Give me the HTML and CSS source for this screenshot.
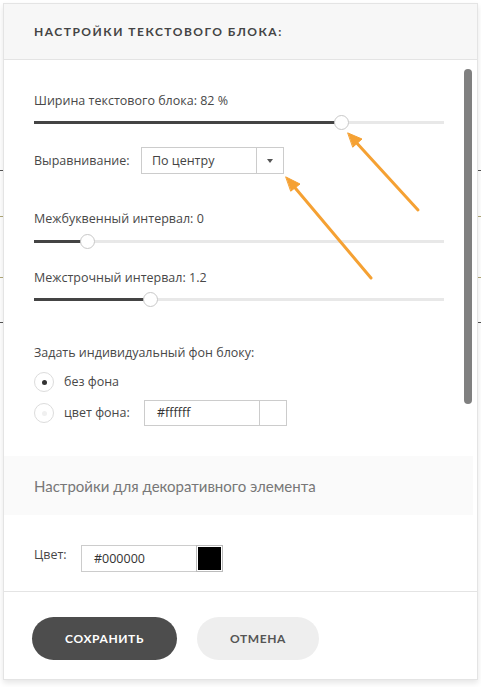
FILE: index.html
```html
<!DOCTYPE html>
<html lang="ru">
<head>
<meta charset="utf-8">
<title>Настройки текстового блока</title>
<link rel="stylesheet" href="styles.css">
</head>
<body>
<div class="backdrop">
  <span class="mark mark-l dark" style="top:170px"></span>
  <span class="mark mark-l olive" style="top:216px"></span>
  <span class="mark mark-l olive" style="top:277px"></span>
  <span class="mark mark-l dark" style="top:322px"></span>
  <span class="mark mark-r dark" style="top:170px"></span>
  <span class="mark mark-r olive" style="top:216px"></span>
  <span class="mark mark-r olive" style="top:277px"></span>
  <span class="mark mark-r dark" style="top:322px"></span>
</div>
<div class="page">
  <div class="modal">
    <div class="header">НАСТРОЙКИ ТЕКСТОВОГО БЛОКА:</div>
    <div class="body">
      <div class="content">
        <div class="label l1">Ширина текстового блока: 82 %</div>
        <div class="slider"><div class="fill" style="width:75%"></div><span class="thumb" style="left:75%"></span></div>

        <div class="align-row">
          <span class="label al">Выравнивание:</span>
          <div class="select"><span class="sel-text">По центру</span><span class="sel-btn"><span class="caret"></span></span></div>
        </div>

        <div class="label l3">Межбуквенный интервал: 0</div>
        <div class="slider"><div class="fill" style="width:13%"></div><span class="thumb" style="left:13%"></span></div>

        <div class="label l4">Межстрочный интервал: 1.2</div>
        <div class="slider"><div class="fill" style="width:28.5%"></div><span class="thumb" style="left:28.5%"></span></div>

        <div class="label l5">Задать индивидуальный фон блоку:</div>
        <div class="radio-row r1"><span class="radio on"></span><span class="label">без фона</span></div>
        <div class="radio-row r2"><span class="radio"></span><span class="label rl">цвет фона:</span>
          <div class="color-input"><span class="hex">#ffffff</span><span class="swatch white"></span></div>
        </div>
      </div>
      <div class="section">Настройки для декоративного элемента</div>
      <div class="content">
        <div class="color-row">
          <span class="label cl">Цвет:</span>
          <div class="color-input small"><span class="hex">#000000</span><span class="swatch black"></span></div>
        </div>
      </div>
      <div class="scrollbar"></div>
    </div>
    <div class="footer">
      <button class="btn save">СОХРАНИТЬ</button>
      <button class="btn cancel">ОТМЕНА</button>
    </div>
  </div>
</div>
<svg class="arrows" width="481" height="687" viewBox="0 0 481 687">
  <g stroke="#f5a133" stroke-width="3" stroke-linecap="round" fill="#f5a133">
    <line x1="418" y1="210" x2="354" y2="140"/>
    <polygon points="348,133 362,139 353,147" stroke-width="1" stroke-linejoin="round"/>
    <line x1="371" y1="278" x2="291" y2="183"/>
    <polygon points="286,177 300,184 291,191" stroke-width="1" stroke-linejoin="round"/>
  </g>
</svg>
</body>
</html>
```
FILE: styles.css
```css
* { box-sizing: border-box; }
html, body { margin: 0; padding: 0; }
body {
  width: 481px;
  height: 687px;
  background: #ffffff;
  font-family: "Open Sans", "Noto Sans", sans-serif;
  color: #444;
  position: relative;
  overflow: hidden;
}
.backdrop { position: absolute; inset: 0; }
.mark { position: absolute; height: 1px; width: 4px; }
.mark-l { left: 0; }
.mark-r { right: 0; }
.dark { background: #555; }
.olive { background: #b0a878; }

.page { padding: 3px 3px 0 3px; position: relative; }
.modal {
  width: 475px;
  height: 677px;
  border: 1px solid #e4e4e4;
  background: #fff;
  display: flex;
  flex-direction: column;
  box-shadow: 0 3px 6px rgba(0,0,0,0.10);
}
.header {
  height: 56px;
  flex: none;
  background: #f7f7f7;
  border-bottom: 1px solid #e4e4e4;
  padding-left: 30px;
  display: flex;
  align-items: center;
  font-family: Lato, "Open Sans", sans-serif;
  font-weight: 700;
  font-size: 12px;
  letter-spacing: 1.5px;
  color: #444;
}
.body {
  flex: 1;
  position: relative;
  overflow: hidden;
}
.content { padding-left: 30px; width: 440px; }
.label { font-size: 12.5px; line-height: 18px; color: #484848; }
.l1 { margin-top: 32px; margin-bottom: 5px; }
.slider {
  position: relative;
  width: 410px;
  height: 14px;
  display: flex;
  align-items: center;
  background: linear-gradient(#e8e8e8, #e8e8e8) left center / 100% 3px no-repeat;
}
.fill { height: 3px; background: #444; }
.thumb {
  position: absolute;
  top: -0.5px;
  width: 15px;
  height: 15px;
  margin-left: -7.5px;
  border-radius: 50%;
  background: #fff;
  border: 1px solid #c8c8c8;
}
.align-row {
  margin-top: 18px;
  display: flex;
  align-items: center;
  height: 27px;
}
.al { width: 107px; flex: none; }
.select {
  width: 143px;
  height: 27px;
  border: 1px solid #cccccc;
  display: flex;
}
.sel-text { flex: 1; padding-left: 10px; font-size: 12.5px; line-height: 25px; color: #444; }
.sel-btn { width: 27px; border-left: 1px solid #cccccc; display: flex; align-items: center; justify-content: center; }
.caret { width: 0; height: 0; border-left: 3.5px solid transparent; border-right: 3.5px solid transparent; border-top: 4px solid #555; margin-top: 1px; }
.l3 { margin-top: 36px; margin-bottom: 6px; }
.l4 { margin-top: 21px; margin-bottom: 5px; }
.l5 { margin-top: 38px; }
.radio-row { display: flex; align-items: center; }
.r1 { margin-top: 10px; height: 20px; }
.r2 { margin-top: 8px; height: 26px; }
.radio {
  flex: none;
  width: 20px; height: 20px; border-radius: 50%;
  border: 1px solid #dcdcdc; background: #fff;
  display: flex; align-items: center; justify-content: center;
  margin-right: 10px;
}
.radio::after { content: ""; width: 5px; height: 5px; border-radius: 50%; background: #f0f0f0; }
.radio.on::after { background: #333; }
.rl { width: 80px; flex: none; }
.color-input { display: flex; height: 26px; }
.hex {
  width: 115px; height: 26px; border: 1px solid #cccccc; border-right: none;
  padding-left: 12px; font-size: 12.5px; line-height: 24px; color: #333;
}
.swatch { width: 28px; height: 26px; border: 1px solid #cccccc; }
.swatch.white { background: #fff; }
.swatch.black { background: #000; border: 1px solid #bbb; box-shadow: inset 0 0 0 1px #fff; }
.section {
  margin-top: 30px;
  width: 469px;
  height: 59px;
  background: #fafafa;
  padding-left: 30px;
  display: flex;
  align-items: center;
  font-family: Lato, "Open Sans", sans-serif;
  font-size: 15px;
  color: #777;
}
.color-row { margin-top: 30px; display: flex; align-items: flex-start; height: 27px; }
.cl { width: 47px; flex: none; line-height: 18px; margin-top: 1px; }
.color-input.small { height: 27px; }
.small .hex { height: 27px; line-height: 25px; }
.small .swatch { height: 27px; width: 27px; }
.scrollbar {
  position: absolute;
  top: 9px;
  right: 5px;
  width: 8px;
  height: 335px;
  border-radius: 4px;
  background: #808080;
}
.footer {
  flex: none;
  height: 88px;
  border-top: 1px solid #e4e4e4;
  padding: 25px 0 0 28px;
  display: flex;
  gap: 20px;
  align-items: flex-start;
}
.btn {
  height: 43px;
  border: none;
  border-radius: 22px;
  font-family: Lato, "Open Sans", sans-serif;
  font-weight: 700;
  font-size: 12px;
  letter-spacing: 0.6px;
  padding: 0;
}
.save { width: 145px; background: #4d4d4d; color: #fff; }
.cancel { width: 122px; background: #eeeeee; color: #555; }
.arrows { position: absolute; left: 0; top: 0; pointer-events: none; }
```
